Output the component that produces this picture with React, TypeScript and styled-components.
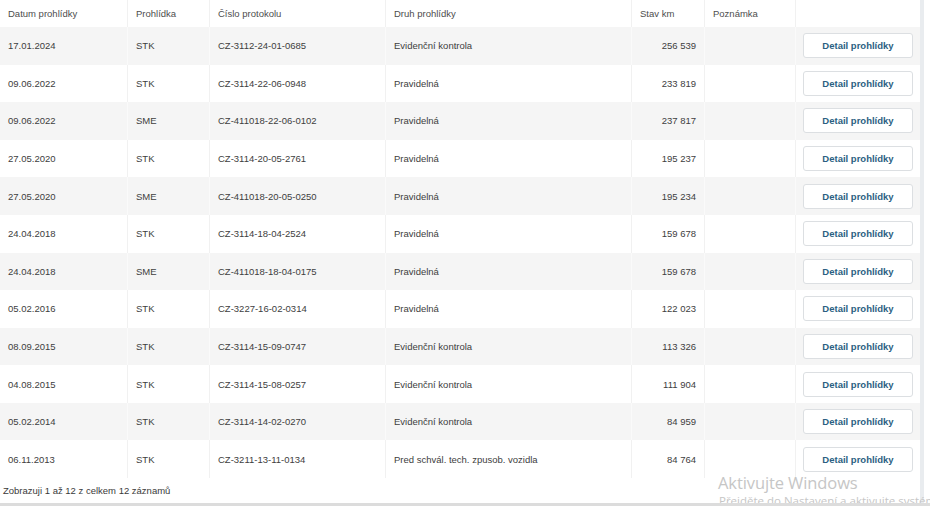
import React from "react";
import styled, { createGlobalStyle } from "styled-components";

const Global = createGlobalStyle`
  html, body { margin: 0; padding: 0; background: #fff; }
  body { font-family: "Liberation Sans", Arial, sans-serif; }
`;

const COLS = "128px 82px 176px 246px 73px 91px 124px";

const Page = styled.div`
  width: 930px;
  height: 506px;
  display: flex;
  flex-direction: column;
  overflow: hidden;
  background: #fff;
`;

const Viewport = styled.div`
  position: relative;
  height: 503px;
  display: flex;
  overflow: hidden;
`;

const Main = styled.div`
  width: 920px;
  display: flex;
  flex-direction: column;
`;

const ScrollEdge = styled.div`
  width: 4px;
  background: #e9ecef;
`;

const BottomBar = styled.div`
  height: 3px;
  background: #dcdcdc;
`;

const Row = styled.div<{ $striped?: boolean; $head?: boolean }>`
  display: grid;
  grid-template-columns: ${COLS};
  height: ${(p) => (p.$head ? "27px" : "37.67px")};
  background: ${(p) => (p.$striped ? "#f5f5f5" : "#fff")};
  box-sizing: border-box;
`;

const Cell = styled.div<{ $right?: boolean; $striped?: boolean; $head?: boolean }>`
  display: flex;
  align-items: center;
  justify-content: ${(p) => (p.$right ? "flex-end" : "flex-start")};
  padding: 0 8px;
  font-size: 9.5px;
  color: ${(p) => (p.$head ? "#4d4d4d" : "#404040")};
  border-right: 1px solid ${(p) => (p.$striped ? "#fafafa" : "#f1f1f1")};
  white-space: nowrap;
  overflow: hidden;
  &:last-child { border-right: none; justify-content: center; padding: 0 6px; }
`;

const DetailButton = styled.button`
  width: 110px;
  height: 25px;
  background: #fff;
  border: 1px solid #dcdfe2;
  border-radius: 3px;
  font-family: "Liberation Sans", Arial, sans-serif;
  font-size: 9.5px;
  font-weight: bold;
  color: #2c5f82;
  cursor: pointer;
  padding: 0;
`;

const Footer = styled.div`
  padding: 7px 3px;
  font-size: 9.5px;
  color: #3a3a3a;
`;

const Watermark = styled.div`
  position: absolute;
  left: 718px;
  top: 475px;
  font-family: "Open Sans", "Noto Sans", sans-serif;
  color: #c6c6c6;
  line-height: 1;
  white-space: nowrap;
  pointer-events: none;
`;

const WmTitle = styled.div`
  font-size: 16.5px;
  letter-spacing: -0.1px;
`;

const WmSub = styled.div`
  font-size: 11.5px;
  margin-top: 3px;
  margin-left: 1px;
`;

const headers = [
  "Datum prohlídky",
  "Prohlídka",
  "Číslo protokolu",
  "Druh prohlídky",
  "Stav km",
  "Poznámka",
  "",
];

const rows: [string, string, string, string, string][] = [
  ["17.01.2024", "STK", "CZ-3112-24-01-0685", "Evidenční kontrola", "256 539"],
  ["09.06.2022", "STK", "CZ-3114-22-06-0948", "Pravidelná", "233 819"],
  ["09.06.2022", "SME", "CZ-411018-22-06-0102", "Pravidelná", "237 817"],
  ["27.05.2020", "STK", "CZ-3114-20-05-2761", "Pravidelná", "195 237"],
  ["27.05.2020", "SME", "CZ-411018-20-05-0250", "Pravidelná", "195 234"],
  ["24.04.2018", "STK", "CZ-3114-18-04-2524", "Pravidelná", "159 678"],
  ["24.04.2018", "SME", "CZ-411018-18-04-0175", "Pravidelná", "159 678"],
  ["05.02.2016", "STK", "CZ-3227-16-02-0314", "Pravidelná", "122 023"],
  ["08.09.2015", "STK", "CZ-3114-15-09-0747", "Evidenční kontrola", "113 326"],
  ["04.08.2015", "STK", "CZ-3114-15-08-0257", "Evidenční kontrola", "111 904"],
  ["05.02.2014", "STK", "CZ-3114-14-02-0270", "Evidenční kontrola", "84 959"],
  ["06.11.2013", "STK", "CZ-3211-13-11-0134", "Pred schvál. tech. zpusob. vozidla", "84 764"],
];

export default function App() {
  return (
    <Page>
      <Global />
      <Viewport>
        <Main>
          <Row $head>
            {headers.map((h, i) => (
              <Cell key={i} $head>
                {h}
              </Cell>
            ))}
          </Row>
          {rows.map((r, i) => {
            const s = i % 2 === 0;
            return (
              <Row key={i} $striped={s}>
                <Cell $striped={s}>{r[0]}</Cell>
                <Cell $striped={s}>{r[1]}</Cell>
                <Cell $striped={s}>{r[2]}</Cell>
                <Cell $striped={s}>{r[3]}</Cell>
                <Cell $striped={s} $right>
                  {r[4]}
                </Cell>
                <Cell $striped={s}></Cell>
                <Cell $striped={s}>
                  <DetailButton>Detail prohlídky</DetailButton>
                </Cell>
              </Row>
            );
          })}
          <Footer>Zobrazuji 1 až 12 z celkem 12 záznamů</Footer>
        </Main>
        <ScrollEdge />
        <Watermark>
          <WmTitle>Aktivujte Windows</WmTitle>
          <WmSub>Přejděte do Nastavení a aktivujte systém Windows.</WmSub>
        </Watermark>
      </Viewport>
      <BottomBar />
    </Page>
  );
}
